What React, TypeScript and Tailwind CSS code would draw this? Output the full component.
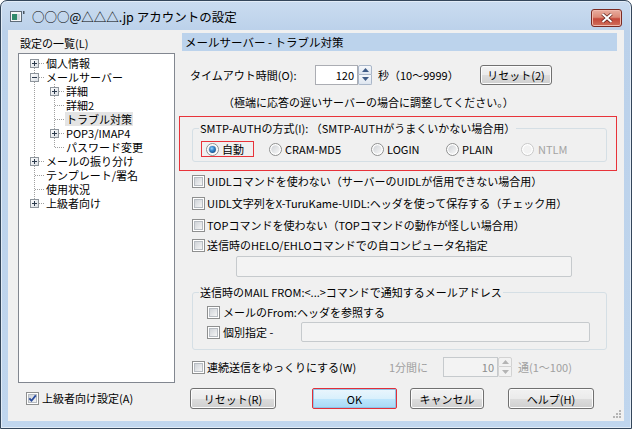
import React from 'react';

function Defs() {
  return (
    <svg width="0" height="0" className="absolute">
      <defs>
        <linearGradient id="gBox" x1="0" y1="0" x2="1" y2="1">
          <stop offset="0" stopColor="#cdd1d6" />
          <stop offset="1" stopColor="#f7f7f7" />
        </linearGradient>
        <linearGradient id="gRadio" x1="0" y1="0" x2="1" y2="1">
          <stop offset="0" stopColor="#cfd2d6" />
          <stop offset="1" stopColor="#f8f8f8" />
        </linearGradient>
        <radialGradient id="gDot" cx="0.4" cy="0.35" r="0.7">
          <stop offset="0" stopColor="#9fd6fb" />
          <stop offset="0.45" stopColor="#3a8ad0" />
          <stop offset="1" stopColor="#164f86" />
        </radialGradient>
        <linearGradient id="gExp" x1="0" y1="0" x2="1" y2="1">
          <stop offset="0" stopColor="#ffffff" />
          <stop offset="1" stopColor="#d8dde3" />
        </linearGradient>
      </defs>
    </svg>
  );
}

function CheckBox({ checked = false }: { checked?: boolean }) {
  return (
    <svg width="13" height="13" viewBox="0 0 13 13" className="shrink-0">
      <rect x="0.5" y="0.5" width="12" height="12" fill="#fff" stroke="#8e8f8f" />
      <rect x="2.5" y="2.5" width="8" height="8" fill="url(#gBox)" stroke="#b7bcc2" />
      {checked && <path d="M3.3 6.3 L5.5 8.7 L9.8 3.4" fill="none" stroke="#2b4c9c" strokeWidth="1.8" />}
    </svg>
  );
}

function Radio({ checked = false, disabled = false }: { checked?: boolean; disabled?: boolean }) {
  return (
    <svg width="13" height="13" viewBox="0 0 13 13" className="shrink-0">
      <circle cx="6.5" cy="6.5" r="6" fill="#fff" stroke={disabled ? '#c8c8c8' : '#8e8f8f'} />
      <circle cx="6.5" cy="6.5" r="4.3" fill={disabled ? '#f2f2f2' : 'url(#gRadio)'} />
      {checked && <circle cx="6.5" cy="6.5" r="3.4" fill="url(#gDot)" />}
    </svg>
  );
}

function Spinner({ disabled = false }: { disabled?: boolean }) {
  const arrow = disabled ? '#b4b4b4' : '#3e5a85';
  return (
    <div className="w-[14px] h-[20px] flex flex-col shrink-0">
      <div className={disabled
        ? 'h-[10px] border border-[#d2d2d2] rounded-t-[2px] bg-[#f2f2f2] flex items-center justify-center'
        : 'h-[10px] border border-[#a9b6c8] rounded-t-[2px] bg-[linear-gradient(#f6f8fb,#dde5ef)] flex items-center justify-center'}>
        <svg width="7" height="4" viewBox="0 0 7 4"><path d="M0 4 L3.5 0 L7 4 Z" fill={arrow} /></svg>
      </div>
      <div className={disabled
        ? 'h-[10px] border border-t-0 border-[#d2d2d2] rounded-b-[2px] bg-[#f2f2f2] flex items-center justify-center'
        : 'h-[10px] border border-t-0 border-[#a9b6c8] rounded-b-[2px] bg-[linear-gradient(#f6f8fb,#dde5ef)] flex items-center justify-center'}>
        <svg width="7" height="4" viewBox="0 0 7 4"><path d="M0 0 L3.5 4 L7 0 Z" fill={arrow} /></svg>
      </div>
    </div>
  );
}

type Cell = { t?: boolean; b?: boolean; h?: boolean; exp?: '+' | '-' };

function TreeCell({ t, b, h, exp }: Cell) {
  return (
    <svg width="20" height="14" viewBox="0 0 20 14" className="shrink-0">
      <g stroke="#a0a0a0" strokeDasharray="1 1">
        {t && <line x1="10.5" y1="0" x2="10.5" y2="7" />}
        {b && <line x1="10.5" y1="8" x2="10.5" y2="14" />}
        {h && <line x1="11" y1="7.5" x2="20" y2="7.5" />}
      </g>
      {exp && (
        <g>
          <rect x="6.5" y="3.5" width="8" height="8" fill="url(#gExp)" stroke="#8e959c" />
          <line x1="8" y1="7.5" x2="13" y2="7.5" stroke="#2c3a4c" />
          {exp === '+' && <line x1="10.5" y1="5" x2="10.5" y2="10" stroke="#2c3a4c" />}
        </g>
      )}
    </svg>
  );
}

const PASS: Cell = { t: true, b: true };

const TREE: { label: string; cells: Cell[]; selected?: boolean }[] = [
  { label: '個人情報', cells: [{ b: true, h: true, exp: '+' }] },
  { label: 'メールサーバー', cells: [{ t: true, b: true, h: true, exp: '-' }] },
  { label: '詳細', cells: [PASS, { t: true, b: true, h: true, exp: '+' }] },
  { label: '詳細2', cells: [PASS, { t: true, b: true, h: true }] },
  { label: 'トラブル対策', cells: [PASS, { t: true, b: true, h: true }], selected: true },
  { label: 'POP3/IMAP4', cells: [PASS, { t: true, b: true, h: true, exp: '+' }] },
  { label: 'パスワード変更', cells: [PASS, { t: true, h: true }] },
  { label: 'メールの振り分け', cells: [{ t: true, b: true, h: true, exp: '+' }] },
  { label: 'テンプレート/署名', cells: [{ t: true, b: true, h: true }] },
  { label: '使用状況', cells: [{ t: true, b: true, h: true }] },
  { label: '上級者向け', cells: [{ t: true, h: true, exp: '+' }] },
];

export default function App() {
  return (
    <div className="w-[632px] h-[429px] font-['Noto_Sans_CJK_JP',sans-serif] text-[11px] leading-[14px] text-black">
      <Defs />
      <div className="w-full h-full flex flex-col rounded-t-[7px] border border-[#34465a] bg-[linear-gradient(#cadcf0,#bbd1ea_30px,#c0d6ee)] shadow-[inset_0_0_0_1px_#e2ecf7]">
        {/* title bar */}
        <div className="h-[29px] shrink-0 flex items-start pl-[9px] pr-[9px]">
          <svg width="16" height="13" viewBox="0 0 16 13" className="mt-[9px] shrink-0">
            <rect x="0.5" y="1.5" width="11" height="10" fill="#f3f5f7" stroke="#5d6b78" />
            <rect x="2" y="4" width="5" height="6" fill="#2f8a6c" />
            <rect x="7" y="4" width="3" height="6" fill="#cfd8df" />
            <rect x="13" y="1" width="1.5" height="3" fill="#4a5560" />
          </svg>
          <span className="ml-[6px] mt-[8px] text-[12.5px] leading-[16px] text-black">○○○@△△△.jp アカウントの設定</span>
          <div className="ml-auto mt-[8px] w-[31px] h-[18px] rounded-[3px] border border-[#7b2a22] bg-[linear-gradient(#e9ad9f,#dc8a77_45%,#c5483a_55%,#d0705c)] shadow-[inset_0_0_0_1px_#f0b9ad] flex items-center justify-center">
            <svg width="12" height="10" viewBox="0 0 12 10">
              <path d="M1.5 1 L10.5 9 M10.5 1 L1.5 9" stroke="#5a1d17" strokeWidth="3.4" />
              <path d="M1.5 1 L10.5 9 M10.5 1 L1.5 9" stroke="#ffffff" strokeWidth="2" />
            </svg>
          </div>
        </div>

        {/* client area */}
        <div className="relative mx-[7px] h-[391px] bg-[#f0f0f0] flex pl-[10px]">
          {/* left column */}
          <div className="w-[157px] shrink-0 flex flex-col">
            <div className="mt-[6px] pl-[2px] h-[14px]">設定の一覧(L)</div>
            <div className="mt-[3px] h-[330px] border border-[#828790] bg-white pt-[2px] pl-[5px] flex flex-col">
              {TREE.map(item => (
                <div key={item.label} className="h-[14px] flex items-center">
                  {item.cells.map((c, i) => <TreeCell key={i} {...c} />)}
                  {item.selected ? (
                    <span className="ml-[1px] px-[1px] bg-[#e4e4e4]">{item.label}</span>
                  ) : (
                    <span className="ml-[2px]">{item.label}</span>
                  )}
                </div>
              ))}
            </div>
            <label className="mt-[8px] ml-[8px] h-[14px] flex items-center gap-[3px]">
              <CheckBox checked />
              <span>上級者向け設定(A)</span>
            </label>
          </div>

          {/* right column */}
          <div className="ml-[7px] w-[435px] flex flex-col">
            <div className="mt-[3px] h-[18px] shrink-0 bg-[#bcd3ec] pl-[3px] flex items-center text-[11.5px]">メールサーバー - トラブル対策</div>

            <div className="mt-[13px] h-[21px] flex items-center">
              <span className="ml-[8px] w-[125px] shrink-0">タイムアウト時間(O):</span>
              <div className="w-[43px] h-[20px] border border-[#abadb3] bg-white flex items-center justify-end pr-[3px]">120</div>
              <Spinner />
              <span className="ml-[6px] w-[102px] shrink-0">秒（10〜9999）</span>
              <button className="w-[72px] h-[20px] rounded-[3px] border border-[#707070] bg-[linear-gradient(#f2f2f2,#ebebeb_50%,#dddddd_50%,#cfcfcf)] shadow-[inset_0_0_0_1px_#fcfcfc] flex items-center justify-center">リセット(2)</button>
            </div>

            <div className="mt-[10px] ml-[41px] h-[14px]">（極端に応答の遅いサーバーの場合に調整してください。）</div>

            {/* SMTP-AUTH (highlighted) */}
            <div className="mt-[7px] -ml-[3px] w-[438px] h-[55px] shrink-0 border border-[#e8333a] pl-[12px] pt-[11px]">
              <div className="relative w-[415px] h-[34px] border border-[#d5dfe5] rounded-[3px] pl-[8px] pt-[12px]">
                <span className="absolute left-[6px] -top-[8px] px-[1px] bg-[#f0f0f0]">SMTP-AUTHの方式(I): （SMTP-AUTHがうまくいかない場合用）</span>
                <div className="h-[16px] flex items-center">
                  <div className="w-[53px] h-[16px] border border-[#e8333a] pl-[4px] flex items-center gap-[3px]">
                    <Radio checked />
                    <span>自動</span>
                  </div>
                  <div className="ml-[15px] w-[102px] flex items-center gap-[3px]"><Radio /><span>CRAM-MD5</span></div>
                  <div className="w-[75px] flex items-center gap-[3px]"><Radio /><span>LOGIN</span></div>
                  <div className="w-[75px] flex items-center gap-[3px]"><Radio /><span>PLAIN</span></div>
                  <div className="flex items-center gap-[4px] text-[#a3a3a3]"><Radio disabled /><span>NTLM</span></div>
                </div>
              </div>
            </div>

            <label className="mt-[2px] ml-[10px] h-[16px] flex items-center gap-[2px]"><CheckBox /><span>UIDLコマンドを使わない（サーバーのUIDLが信用できない場合用）</span></label>
            <label className="mt-[6px] ml-[10px] h-[16px] flex items-center gap-[2px]"><CheckBox /><span>UIDL文字列をX-TuruKame-UIDL:ヘッダを使って保存する（チェック用）</span></label>
            <label className="mt-[6px] ml-[10px] h-[16px] flex items-center gap-[2px]"><CheckBox /><span>TOPコマンドを使わない（TOPコマンドの動作が怪しい場合用）</span></label>
            <label className="mt-[4px] ml-[10px] h-[16px] flex items-center gap-[2px]"><CheckBox /><span>送信時のHELO/EHLOコマンドでの自コンピュータ名指定</span></label>
            <div className="mt-[3px] ml-[54px] w-[336px] h-[21px] shrink-0 border border-[#c6cacd] rounded-[2px] bg-[#f3f3f3]" />

            {/* MAIL FROM group */}
            <div className="relative mt-[15px] ml-[10px] w-[415px] h-[58px] shrink-0 border border-[#d5dfe5] rounded-[3px] pl-[14px] pt-[11px]">
              <span className="absolute left-[6px] -top-[8px] px-[1px] bg-[#f0f0f0]">送信時のMAIL FROM:&lt;...&gt;コマンドで通知するメールアドレス</span>
              <label className="h-[16px] flex items-center gap-[3px]"><CheckBox /><span>メールのFrom:ヘッダを参照する</span></label>
              <div className="mt-[2px] h-[20px] flex items-center">
                <label className="w-[94px] shrink-0 flex items-center gap-[3px]"><CheckBox /><span>個別指定 -</span></label>
                <div className="w-[289px] h-[20px] border border-[#c6cacd] rounded-[2px] bg-[#f3f3f3]" />
              </div>
            </div>

            <div className="mt-[7px] ml-[10px] h-[20px] flex items-center">
              <label className="w-[197px] shrink-0 flex items-center gap-[2px]"><CheckBox /><span>連続送信をゆっくりにする(W)</span></label>
              <span className="w-[54px] shrink-0 text-[#a0a0a0]">1分間に</span>
              <div className="w-[55px] h-[20px] border border-[#c6cacd] bg-[#f3f3f3] flex items-center justify-end pr-[3px] text-[#8d8d8d]">10</div>
              <Spinner disabled />
              <span className="ml-[6px] text-[#a0a0a0]">通(1〜100)</span>
            </div>

            <div className="mt-[11px] h-[21px] flex items-center">
              <button className="ml-[8px] w-[86px] h-[21px] rounded-[3px] border border-[#707070] bg-[linear-gradient(#f2f2f2,#ebebeb_50%,#dddddd_50%,#cfcfcf)] shadow-[inset_0_0_0_1px_#fcfcfc] flex items-center justify-center">リセット(R)</button>
              <button className="ml-[36px] w-[85px] h-[21px] rounded-[2px] border border-[#e0303a] bg-[linear-gradient(#eaf6fd,#d9f0fc_50%,#bee6fd_50%,#a7d9f5)] shadow-[inset_0_0_0_1px_#8fc3e8] flex items-center justify-center">OK</button>
              <button className="ml-[13px] w-[74px] h-[21px] rounded-[3px] border border-[#707070] bg-[linear-gradient(#f2f2f2,#ebebeb_50%,#dddddd_50%,#cfcfcf)] shadow-[inset_0_0_0_1px_#fcfcfc] flex items-center justify-center">キャンセル</button>
              <button className="ml-[24px] w-[86px] h-[21px] rounded-[3px] border border-[#707070] bg-[linear-gradient(#f2f2f2,#ebebeb_50%,#dddddd_50%,#cfcfcf)] shadow-[inset_0_0_0_1px_#fcfcfc] flex items-center justify-center">ヘルプ(H)</button>
            </div>
          </div>

          {/* size grip */}
          <svg width="10" height="10" viewBox="0 0 10 10" className="absolute right-[2px] bottom-[2px]">
            <g fill="#b4b4b4">
              <rect x="7" y="1" width="2" height="2" />
              <rect x="4" y="4" width="2" height="2" />
              <rect x="7" y="4" width="2" height="2" />
              <rect x="1" y="7" width="2" height="2" />
              <rect x="4" y="7" width="2" height="2" />
              <rect x="7" y="7" width="2" height="2" />
            </g>
          </svg>
        </div>
      </div>
    </div>
  );
}
